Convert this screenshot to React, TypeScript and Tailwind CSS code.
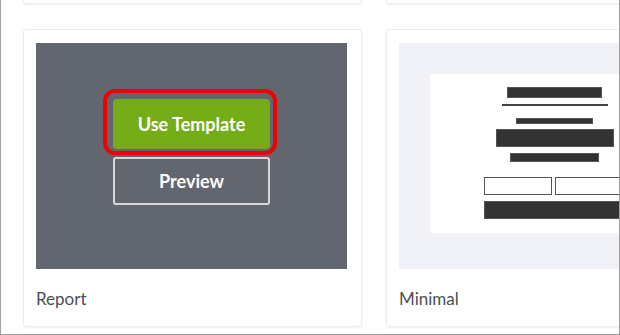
const font = { fontFamily: 'Lato, "Open Sans", sans-serif' };

function Card({ children, label }: { children?: React.ReactNode; label?: string }) {
  return (
    <div className="w-[339px] shrink-0 rounded-[3px] border border-[#ececee] bg-white px-[12px] pt-[13px] pb-[15px] shadow-[0_1px_2px_rgba(0,0,0,0.06)]">
      {children}
      {label && (
        <div className="mt-[18px] text-[17px] leading-[24px] text-[#4b4e57]" style={font}>
          {label}
        </div>
      )}
    </div>
  );
}

function ReportThumb() {
  return (
    <div className="flex h-[226px] w-[311px] flex-col items-center bg-[#62666f] pt-[56px]">
      <div className="relative">
        <div className="pointer-events-none absolute -top-[10px] -left-[10px] -right-[7px] -bottom-[6px] rounded-[12px] border-[4px] border-[#f00000]" />
        <button
          className="flex h-[50px] w-[157px] items-center justify-center rounded-[4px] bg-[#74ad18] text-[18px] font-bold text-white"
          style={font}
        >
          Use Template
        </button>
      </div>
      <button
        className="mt-[8px] flex h-[48px] w-[157px] items-center justify-center rounded-[3px] border-2 border-[#d6d7db] text-[18px] font-bold text-white"
        style={font}
      >
        Preview
      </button>
    </div>
  );
}

function MinimalThumb() {
  return (
    <div className="flex h-[226px] w-[311px] justify-center bg-[#f1f2f7] pt-[31px]">
      <div className="flex h-[159px] w-[249px] flex-col items-center bg-white">
        <div className="mt-[13px] h-[11px] w-[95px] border border-[#555] bg-[#333]" />
        <div className="mt-[6px] h-[2px] w-[106px] bg-[#444]" />
        <div className="mt-[12px] h-[6px] w-[77px] border border-[#555] bg-[#333]" />
        <div className="mt-[5px] h-[18px] w-[118px] border border-[#555] bg-[#333]" />
        <div className="mt-[6px] h-[9px] w-[89px] border border-[#555] bg-[#333]" />
        <div className="mt-[15px] flex w-[142px] gap-[3px]">
          <div className="h-[18px] w-[68px] border-[1.5px] border-[#555] bg-white" />
          <div className="h-[18px] flex-1 border-[1.5px] border-[#555] bg-white" />
        </div>
        <div className="mt-[6px] h-[18px] w-[142px] border border-[#555] bg-[#333]" />
      </div>
    </div>
  );
}

export default function App() {
  return (
    <div className="h-[335px] w-[620px] overflow-hidden border-x border-b border-[#a0a0a0] bg-white">
      <div className="-mt-[296px] ml-[22px] flex flex-col gap-[25px]">
        <div className="flex gap-[24px]">
          <div className="h-[300px] w-[339px] shrink-0 rounded-[3px] border border-[#ececee] bg-white shadow-[0_1px_2px_rgba(0,0,0,0.06)]" />
          <div className="h-[300px] w-[339px] shrink-0 rounded-[3px] border border-[#ececee] bg-white shadow-[0_1px_2px_rgba(0,0,0,0.06)]" />
        </div>
        <div className="flex gap-[24px]">
          <Card label="Report">
            <ReportThumb />
          </Card>
          <Card label="Minimal">
            <MinimalThumb />
          </Card>
        </div>
      </div>
    </div>
  );
}
